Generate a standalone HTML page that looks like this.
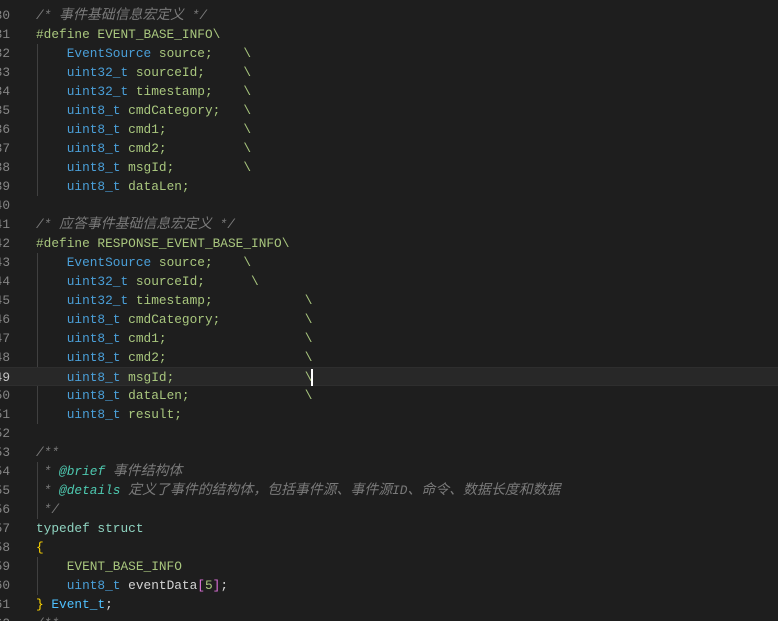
<!DOCTYPE html>
<html><head><meta charset="utf-8"><style>
html,body{margin:0;padding:0;background:#1e1e1e;width:778px;height:621px;overflow:hidden}
.wrap{position:relative;top:6px}
.l{position:relative;height:19px;line-height:19px;font-family:"Liberation Mono","Noto Sans CJK SC",monospace;font-size:12.8px;white-space:pre;color:#b5cea8}
.n{position:absolute;right:768px;top:0;color:#858585;text-align:right}
.c{position:absolute;left:36px;top:0}
.cur{background:#282828;border-top:1px solid #2e2e2e;border-bottom:1px solid #2e2e2e;box-sizing:border-box}
.cur .n{color:#c6c6c6}
.cm{color:#7a7a7a;font-style:italic}
.zh{font-size:13.9px}
.tg{color:#4ec9b0;font-style:italic}
.t{color:#4a9fd8}
.g{color:#a9c77e}
.k{color:#8fd3c0}
.y{color:#ffd700}
.p{color:#da70d6}
.b{color:#4fc1ff}
.w{color:#d4d4d4}
.guide{position:absolute;left:37px;width:1px;background:#404040}
.caret{display:inline-block;width:2px;height:17px;background:#fff;vertical-align:middle;margin-left:-1px}
</style></head><body><div class="wrap">
<div class="guide" style="top:38px;height:152px"></div>
<div class="guide" style="top:247px;height:171px"></div>
<div class="guide" style="top:456px;height:57px"></div>
<div class="guide" style="top:551px;height:38px"></div>
<div class="l"><span class="n">30</span><span class="c cm">/* <span class="zh">事件基础信息宏定义</span> */</span></div>
<div class="l"><span class="n">31</span><span class="c g">#define EVENT_BASE_INFO\</span></div>
<div class="l"><span class="n">32</span><span class="c">    <span class="t">EventSource</span> <span class="g">source;    \</span></span></div>
<div class="l"><span class="n">33</span><span class="c">    <span class="t">uint32_t</span> <span class="g">sourceId;     \</span></span></div>
<div class="l"><span class="n">34</span><span class="c">    <span class="t">uint32_t</span> <span class="g">timestamp;    \</span></span></div>
<div class="l"><span class="n">35</span><span class="c">    <span class="t">uint8_t</span> <span class="g">cmdCategory;   \</span></span></div>
<div class="l"><span class="n">36</span><span class="c">    <span class="t">uint8_t</span> <span class="g">cmd1;          \</span></span></div>
<div class="l"><span class="n">37</span><span class="c">    <span class="t">uint8_t</span> <span class="g">cmd2;          \</span></span></div>
<div class="l"><span class="n">38</span><span class="c">    <span class="t">uint8_t</span> <span class="g">msgId;         \</span></span></div>
<div class="l"><span class="n">39</span><span class="c">    <span class="t">uint8_t</span> <span class="g">dataLen;</span></span></div>
<div class="l"><span class="n">40</span></div>
<div class="l"><span class="n">41</span><span class="c cm">/* <span class="zh">应答事件基础信息宏定义</span> */</span></div>
<div class="l"><span class="n">42</span><span class="c g">#define RESPONSE_EVENT_BASE_INFO\</span></div>
<div class="l"><span class="n">43</span><span class="c">    <span class="t">EventSource</span> <span class="g">source;    \</span></span></div>
<div class="l"><span class="n">44</span><span class="c">    <span class="t">uint32_t</span> <span class="g">sourceId;      \</span></span></div>
<div class="l"><span class="n">45</span><span class="c">    <span class="t">uint32_t</span> <span class="g">timestamp;            \</span></span></div>
<div class="l"><span class="n">46</span><span class="c">    <span class="t">uint8_t</span> <span class="g">cmdCategory;           \</span></span></div>
<div class="l"><span class="n">47</span><span class="c">    <span class="t">uint8_t</span> <span class="g">cmd1;                  \</span></span></div>
<div class="l"><span class="n">48</span><span class="c">    <span class="t">uint8_t</span> <span class="g">cmd2;                  \</span></span></div>
<div class="l cur"><span class="n">49</span><span class="c">    <span class="t">uint8_t</span> <span class="g">msgId;                 \</span><span class="caret"></span></span></div>
<div class="l"><span class="n">50</span><span class="c">    <span class="t">uint8_t</span> <span class="g">dataLen;               \</span></span></div>
<div class="l"><span class="n">51</span><span class="c">    <span class="t">uint8_t</span> <span class="g">result;</span></span></div>
<div class="l"><span class="n">52</span></div>
<div class="l"><span class="n">53</span><span class="c cm">/**</span></div>
<div class="l"><span class="n">54</span><span class="c cm"> * <span class="tg">@brief</span> <span class="zh">事件结构体</span></span></div>
<div class="l"><span class="n">55</span><span class="c cm"> * <span class="tg">@details</span> <span class="zh">定义了事件的结构体，包括事件源、事件源</span>ID<span class="zh">、命令、数据长度和数据</span></span></div>
<div class="l"><span class="n">56</span><span class="c cm"> */</span></div>
<div class="l"><span class="n">57</span><span class="c k">typedef struct</span></div>
<div class="l"><span class="n">58</span><span class="c y">{</span></div>
<div class="l"><span class="n">59</span><span class="c">    <span class="g">EVENT_BASE_INFO</span></span></div>
<div class="l"><span class="n">60</span><span class="c">    <span class="t">uint8_t</span> <span class="w">eventData</span><span class="p">[</span><span class="g">5</span><span class="p">]</span><span class="w">;</span></span></div>
<div class="l"><span class="n">61</span><span class="c"><span class="y">}</span> <span class="b">Event_t</span><span class="w">;</span></span></div>
<div class="l"><span class="n">62</span><span class="c cm">/**</span></div>
</div></body></html>
